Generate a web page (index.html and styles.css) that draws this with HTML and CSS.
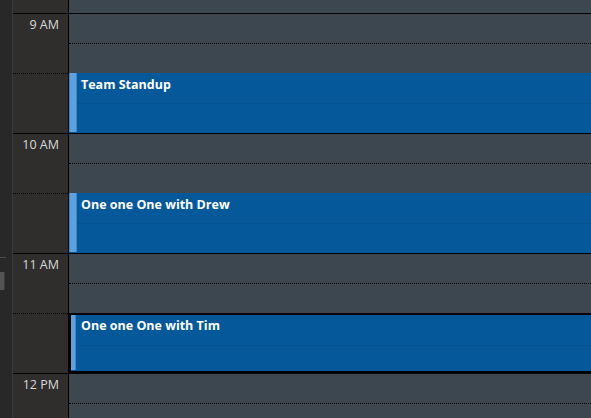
FILE: index.html
```html
<!DOCTYPE html>
<html>
<head>
<meta charset="utf-8">
<link rel="stylesheet" href="styles.css">
</head>
<body>
<div class="app">
  <div class="rail">
    <div class="rail-tick"></div>
    <div class="rail-thumb"></div>
  </div>
  <div class="times">
    <div class="top-strip"></div>
    <div class="time-hour">
      <div class="time-half first">9 AM</div>
      <div class="time-half"></div>
    </div>
    <div class="time-hour">
      <div class="time-half first">10 AM</div>
      <div class="time-half"></div>
    </div>
    <div class="time-hour">
      <div class="time-half first">11 AM</div>
      <div class="time-half"></div>
    </div>
    <div class="time-hour">
      <div class="time-half first">12 PM</div>
      <div class="time-half"></div>
    </div>
  </div>
  <div class="grid">
    <div class="top-strip"></div>
    <div class="hour">
      <div class="slot first"></div><div class="slot"></div><div class="slot"></div><div class="slot"></div>
      <div class="event"><div class="accent"></div><div class="title">Team Standup</div></div>
    </div>
    <div class="hour">
      <div class="slot first"></div><div class="slot"></div><div class="slot"></div><div class="slot"></div>
      <div class="event"><div class="accent"></div><div class="title">One one One with Drew</div></div>
    </div>
    <div class="hour">
      <div class="slot first"></div><div class="slot"></div><div class="slot"></div><div class="slot"></div>
      <div class="event selected"><div class="accent"></div><div class="title">One one One with Tim</div></div>
    </div>
    <div class="hour">
      <div class="slot first"></div><div class="slot"></div><div class="slot"></div><div class="slot"></div>
    </div>
  </div>
</div>
</body>
</html>
```
FILE: styles.css
```css
html, body {
  margin: 0;
  padding: 0;
  width: 591px;
  height: 418px;
  overflow: hidden;
  background: #3c4750;
}
.app {
  display: flex;
  width: 591px;
  height: 418px;
  overflow: hidden;
  font-family: "Open Sans", "Liberation Sans", sans-serif;
}
.rail {
  width: 12px;
  flex: none;
  background: #282828;
  border-right: 1px solid #3b3b3b;
  display: flex;
  flex-direction: column;
}
.rail-tick {
  margin-top: 257px;
  width: 6px;
  height: 1px;
  background: #4a4a4a;
}
.rail-thumb {
  margin-top: 14px;
  width: 4px;
  height: 18px;
  background: #545454;
  border-right: 1px solid #3a3a3a;
}
.times {
  width: 55px;
  flex: none;
  background: #302e2c;
  border-right: 1px solid #000;
}
.top-strip {
  height: 13px;
}
.time-hour {
  height: 120px;
}
.time-half {
  height: 60px;
  box-sizing: border-box;
  border-top: 1px dotted #000;
}
.time-half.first {
  border-top: 1px solid #000;
  text-align: right;
  padding: 3px 9px 0 0;
  font-size: 12.5px;
  line-height: 16px;
  color: #d8d8d8;
}
.grid {
  flex: 1;
  min-width: 0;
  background: #3c4750;
}
.hour {
  position: relative;
  height: 120px;
}
.slot {
  height: 30px;
  box-sizing: border-box;
  border-top: 1px dotted #000;
}
.slot.first {
  border-top: 1px solid #000;
}
.event {
  position: absolute;
  left: 0;
  right: -20px;
  top: 60px;
  height: 60px;
  box-sizing: border-box;
  background: #05599a;
  display: flex;
  align-items: flex-start;
}
.event::after {
  content: "";
  position: absolute;
  left: 8px;
  right: 0;
  top: 30px;
  border-top: 1px dotted rgba(0, 0, 0, 0.1);
}
.event.selected {
  border: 2px solid #000;
}
.accent {
  width: 6px;
  margin-bottom: 1px;
  align-self: stretch;
  flex: none;
  background: #5ca2de;
  border-left: 1px solid #3f86c6;
  border-right: 1px solid #3f86c6;
}
.event.selected .accent {
  width: 4px;
  border-left: none;
}
.title {
  padding: 4px 0 0 4px;
  font-size: 12.5px;
  line-height: 16px;
  font-weight: 700;
  color: #ffffff;
  white-space: nowrap;
}
.event.selected .title {
  padding: 3px 0 0 5px;
}
```
